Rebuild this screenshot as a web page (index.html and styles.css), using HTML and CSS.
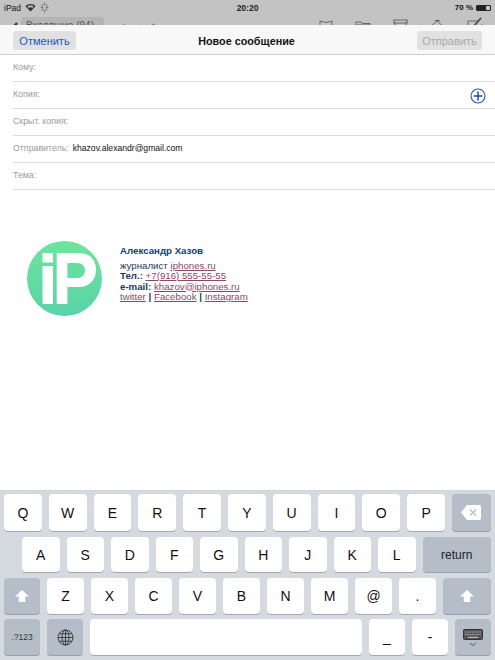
FILE: index.html
```html
<!DOCTYPE html>
<html lang="en">
<head>
    <meta charset="UTF-8">
    <meta name="viewport" content="width=device-width, initial-scale=1.0">
    <title>Новое сообщение</title>
    <link rel="stylesheet" href="styles.css">
</head>
<body>

    <div class="backdrop">
        <div class="status-bar">
            <div class="status-left">
                <span>iPad</span>
                <svg class="wifi" width="11" height="9" viewBox="0 0 11 9"><path d="M5.5 8.5 L0.3 3 A7.5 7.5 0 0 1 10.7 3 Z" fill="#333"/><path d="M5.5 6.6 L2.3 3.6 A4.8 4.8 0 0 1 8.7 3.6 Z" fill="#bbb"/><path d="M5.5 7.4 L3.6 5.2 A2.8 2.8 0 0 1 7.4 5.2 Z" fill="#333"/></svg>
                <svg class="spinner" width="9" height="11" viewBox="0 0 9 11"><g stroke="#777" stroke-width="1.2"><path d="M4.5 0.5V3"/><path d="M4.5 8V10.5"/><path d="M0.5 5.5H3"/><path d="M6 5.5H8.5"/><path d="M1.7 2.7L3.3 4.3"/><path d="M5.7 6.7L7.3 8.3"/><path d="M1.7 8.3L3.3 6.7"/><path d="M5.7 4.3L7.3 2.7"/></g></svg>
            </div>
            <div class="status-time">20:20</div>
            <div class="status-right">
                <span>70 %</span>
                <div class="battery"><div class="battery-level"></div></div>
            </div>
        </div>
        <div class="mail-toolbar">
            <svg class="tool-pen" width="8" height="12" viewBox="0 0 8 12"><path d="M1 9L7 2" stroke="#333" stroke-width="2.4"/></svg>
            <div class="mailbox-chip">Входящие (94)</div>
            <svg class="tool-chevrons" width="38" height="12" viewBox="0 0 38 12"><path d="M2 8L6 4L10 8" fill="none" stroke="#555" stroke-width="1.3"/><path d="M21 4L25 8L29 4" fill="none" stroke="#555" stroke-width="1.3"/><path d="M32 8L36 3" fill="none" stroke="#555" stroke-width="1.3"/></svg>
            <div class="tool-icons">
                <svg width="14" height="12" viewBox="0 0 14 12"><path d="M1 12V2L7 3.5L13 2V12" fill="none" stroke="#666"/></svg>
                <svg width="16" height="12" viewBox="0 0 16 12"><path d="M1 12V3H6L7 4.5H15V12M1 6H15" fill="none" stroke="#666"/></svg>
                <svg width="15" height="12" viewBox="0 0 15 12"><path d="M1 1H14V4H1ZM2 4V12M13 4V12M5.5 7H9.5" fill="none" stroke="#666" stroke-width="1.2"/></svg>
                <svg width="16" height="12" viewBox="0 0 16 12"><path d="M1 8L8 2L15 8M6 1.5H11" fill="none" stroke="#666"/></svg>
                <svg width="16" height="14" viewBox="0 0 16 14"><path d="M11 4H1V14M15 14V7" fill="none" stroke="#666"/><path d="M7 9L14 1" stroke="#444" stroke-width="1.6"/></svg>
            </div>
        </div>
    </div>

    <div class="compose">
        <div class="compose-header">
            <button class="nav-button cancel">Отменить</button>
            <div class="compose-title">Новое сообщение</div>
            <button class="nav-button send">Отправить</button>
        </div>

        <div class="fields">
            <div class="field"><span class="field-label">Кому:</span></div>
            <div class="field">
                <span class="field-label">Копия:</span>
                <svg class="add-icon" width="16" height="16" viewBox="0 0 16 16"><circle cx="8" cy="8" r="7" fill="none" stroke="#2b52b8" stroke-width="1.1"/><path d="M8 3.6V12.4M3.6 8H12.4" stroke="#1f49b0" stroke-width="1.5"/></svg>
            </div>
            <div class="field"><span class="field-label">Скрыт. копия:</span></div>
            <div class="field"><span class="field-label">Отправитель:</span><span class="field-value">khazov.alexandr@gmail.com</span></div>
            <div class="field"><span class="field-label">Тема:</span></div>
        </div>

        <div class="signature">
            <svg class="logo" width="75" height="75" viewBox="0 0 75 75">
                <defs>
                    <linearGradient id="logoFill" x1="0" y1="0" x2="0" y2="1">
                        <stop offset="0" stop-color="#6fe49b"/>
                        <stop offset="1" stop-color="#58d3a9"/>
                    </linearGradient>
                </defs>
                <circle cx="37.5" cy="37.5" r="37.5" fill="url(#logoFill)"/>
                <rect x="15.5" y="12" width="10.5" height="9.5" fill="#fff"/>
                <rect x="15.5" y="25" width="10.5" height="38" fill="#fff"/>
                <path fill-rule="evenodd" fill="#fff" d="M29.7 12H52C63 12 69 19 69 29C69 39 62 46 52 46H40.4V63H29.7ZM40.4 22V37H50C55 37 58 33.5 58 29.5C58 25 55 22 50 22Z"/>
            </svg>
            <div class="signature-text">
                <div class="signature-name">Александр Хазов</div>
                <div>журналист <a href="#">iphones.ru</a></div>
                <div><b>Тел.:</b> <a href="#">+7(916) 555-55-55</a></div>
                <div><b>e-mail:</b> <a href="#">khazov@iphones.ru</a></div>
                <div><a href="#">twitter</a> <b>|</b> <a href="#">Facebook</a> <b>|</b> <a href="#">Instagram</a></div>
            </div>
        </div>
    </div>

    <div class="keyboard">
        <div class="key-row row-one">
            <div class="key">Q</div><div class="key">W</div><div class="key">E</div><div class="key">R</div><div class="key">T</div><div class="key">Y</div><div class="key">U</div><div class="key">I</div><div class="key">O</div><div class="key">P</div>
            <div class="key dark">
                <svg width="20" height="15" viewBox="0 0 20 15"><path d="M6 0H18A2 2 0 0 1 20 2V13A2 2 0 0 1 18 15H6L0 7.5Z" fill="#fff"/><path d="M9 4.5L15 10.5M15 4.5L9 10.5" stroke="#b4bdc9" stroke-width="1.2"/></svg>
            </div>
        </div>
        <div class="key-row row-two">
            <div class="key">A</div><div class="key">S</div><div class="key">D</div><div class="key">F</div><div class="key">G</div><div class="key">H</div><div class="key">J</div><div class="key">K</div><div class="key">L</div>
            <div class="key dark return">return</div>
        </div>
        <div class="key-row row-three">
            <div class="key dark">
                <svg width="14" height="12" viewBox="0 0 15 13"><path d="M7.5 0L15 7H11V13H4V7H0Z" fill="#fff"/></svg>
            </div>
            <div class="key">Z</div><div class="key">X</div><div class="key">C</div><div class="key">V</div><div class="key">B</div><div class="key">N</div><div class="key">M</div><div class="key">@</div><div class="key">.</div>
            <div class="key dark">
                <svg width="14" height="12" viewBox="0 0 15 13"><path d="M7.5 0L15 7H11V13H4V7H0Z" fill="#fff"/></svg>
            </div>
        </div>
        <div class="key-row row-four">
            <div class="key dark numbers">.?123</div>
            <div class="key dark">
                <svg width="17" height="17" viewBox="0 0 17 17"><g fill="none" stroke="#333" stroke-width="0.9"><circle cx="8.5" cy="8.5" r="7.5"/><ellipse cx="8.5" cy="8.5" rx="3.5" ry="7.5"/><path d="M8.5 1V16M1 8.5H16M2 4.8H15M2 12.2H15"/></g></svg>
            </div>
            <div class="key"></div>
            <div class="key">_</div>
            <div class="key">-</div>
            <div class="key dark keyboard-key">
                <svg width="20" height="19" viewBox="0 0 20 19"><rect x="0.5" y="0.5" width="19" height="10" rx="1" fill="#555" stroke="#333"/><path d="M2 3H18M2 5.5H18" stroke="#ccd" stroke-width="0.8" stroke-dasharray="1 0.7"/><path d="M5 8.3H15" stroke="#ccd" stroke-width="1"/><path d="M7 14L10 16.5L13 14" fill="none" stroke="#555"/></svg>
            </div>
        </div>
    </div>

</body>
</html>
```

FILE: styles.css
```css
/* Basic reset */
* {
    margin: 0;
    padding: 0;
    box-sizing: border-box;
}
body {
    font-family: "Liberation Sans", Arial, sans-serif;
    width: 495px;
    height: 660px;
    overflow: hidden;
    background-color: #fff;
    display: flex;
    flex-direction: column;
}

/* Dimmed mail app behind the sheet */
.backdrop {
    height: 25px;
    flex: none;
    overflow: hidden;
    background-color: #c3c3c3;
}

.status-bar {
    height: 15px;
    padding: 0 4px;
    display: grid;
    grid-template-columns: 1fr auto 1fr;
    align-items: center;
    font-size: 8.5px;
    color: #111;
}

.status-left {
    display: flex;
    align-items: center;
    gap: 4px;
}

.status-time {
    font-weight: bold;
    color: #222;
}

.status-right {
    display: flex;
    justify-content: flex-end;
    align-items: center;
    gap: 3px;
    font-size: 8px;
    font-weight: bold;
}

.battery {
    width: 15px;
    height: 6px;
    border: 1px solid #222;
    border-radius: 1px;
}

.battery-level {
    width: 70%;
    height: 100%;
    background-color: #222;
}

.mail-toolbar {
    height: 20px;
    padding-left: 10px;
    margin-top: 2px;
    display: flex;
    align-items: flex-start;
}

.tool-pen {
    margin-top: 4px;
}

.mailbox-chip {
    width: 83px;
    height: 20px;
    margin-left: 3px;
    padding: 4px 5px;
    background-color: #b4b4b4;
    border-radius: 4px;
    font-size: 10px;
    line-height: 1;
    white-space: nowrap;
    color: #555;
}

.tool-chevrons {
    margin: 4px 0 0 14px;
}

.tool-icons {
    margin-left: auto;
    width: 176px;
    padding-right: 12px;
    display: flex;
    justify-content: space-between;
    align-items: flex-end;
}

/* Compose sheet */
.compose {
    flex: 1;
    min-height: 0;
    background-color: #fff;
}

.compose-header {
    height: 30px;
    padding: 5px 13px 3px;
    display: flex;
    justify-content: space-between;
    align-items: center;
    background-color: #f8f8f8;
    border-bottom: 1px solid #d0d0d0;
}

.nav-button {
    height: 19px;
    border: none;
    border-radius: 3px;
    background-color: #e1e1e1;
    font-family: inherit;
    font-size: 11px;
}

.cancel {
    width: 63px;
    color: #1f56c8;
}

.send {
    width: 65px;
    color: #a9a9a9;
}

.compose-title {
    font-size: 10.8px;
    font-weight: bold;
    color: #111;
}

.field {
    height: 27px;
    margin-left: 13px;
    padding-bottom: 2px;
    display: flex;
    align-items: center;
    border-bottom: 1px solid #dcdcdc;
    font-size: 8.8px;
    position: relative;
}

.field-label {
    color: #9a9a9a;
}

.field-value {
    margin-left: 4px;
    font-size: 8.6px;
    color: #111;
}

.add-icon {
    position: absolute;
    right: 9px;
    top: 6px;
}

/* Signature */
.signature {
    margin: 51px 0 0 27px;
    display: flex;
    align-items: flex-start;
}

.logo {
    flex: none;
}

.signature-text {
    margin: 5px 0 0 18px;
    font-size: 9.7px;
    line-height: 10.5px;
    color: #1d3a5c;
}

.signature-name {
    margin-bottom: 4px;
    font-weight: bold;
    color: #0e3f73;
}

.signature-text a {
    color: #8d4668;
    text-decoration: underline;
}

/* Keyboard */
.keyboard {
    height: 170px;
    flex: none;
    padding: 3px 4px 0;
    background-color: #d5d9e0;
    border-top: 1px solid #cfd3da;
    display: flex;
    flex-direction: column;
}

.key-row {
    display: grid;
    column-gap: 7px;
}

.row-one {
    height: 37px;
    margin-bottom: 6px;
    grid-template-columns: repeat(10, 37.8px) 1fr;
}

.row-two {
    height: 35px;
    margin-bottom: 6px;
    padding-left: 18px;
    grid-template-columns: repeat(9, 37.5px) 1fr;
}

.row-three {
    height: 36px;
    margin-bottom: 5px;
    grid-template-columns: 36px repeat(9, 37px) 1fr;
}

.row-four {
    height: 36px;
    grid-template-columns: 36px 36px 1fr 36px 36px 36px;
}

.key {
    display: flex;
    justify-content: center;
    align-items: center;
    background-color: #fff;
    border-radius: 4px;
    box-shadow: 0 1px 0 #a4a8ae;
    font-size: 14px;
    color: #111;
}

.dark {
    background-color: #b5bdc9;
    box-shadow: 0 1px 0 #989ea8;
}

.return {
    font-size: 12px;
    color: #222;
}

.numbers {
    font-size: 8.5px;
    color: #333;
}

.keyboard-key {
    padding-top: 3px;
}
```
